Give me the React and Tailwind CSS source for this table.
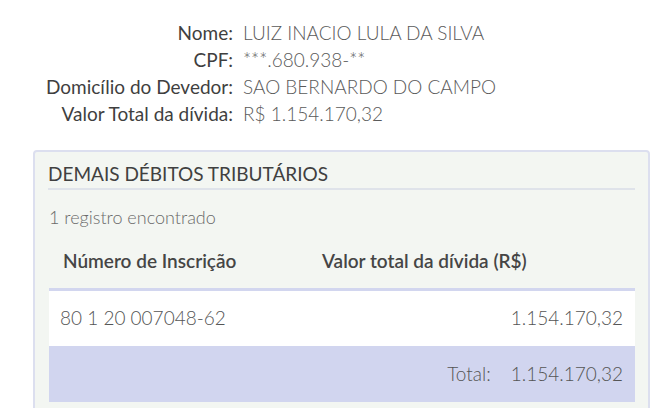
export default function App() {
  const info = [
    ['Nome:', 'LUIZ INACIO LULA DA SILVA'],
    ['CPF:', '***.680.938-**'],
    ['Domicílio do Devedor:', 'SAO BERNARDO DO CAMPO'],
    ['Valor Total da dívida:', 'R$ 1.154.170,32'],
  ];

  return (
    <div className="w-[652px] h-[408px] overflow-hidden bg-white text-[#444] font-['Lato','Open_Sans',sans-serif]">
      {/* dados do devedor */}
      <div className="pt-[21px] grid grid-cols-[233px_1fr] gap-x-[10px] gap-y-[3px] text-[19px] leading-[24px]">
        {info.map(([label, value]) => (
          <div key={label} className="contents">
            <div className="text-right text-[#3f3f3f]">{label}</div>
            <div className="text-[#5a5a5a] font-light">{value}</div>
          </div>
        ))}
      </div>

      {/* painel */}
      <div className="mt-[24px] ml-[33px] mr-[2px] h-[300px] rounded-[4px] border-2 border-[#dcdfef] bg-[#f3f6f2] px-[10px] pt-[10px]">
        <div className="mx-[3px] border-b-2 border-[#dfe3ea] pb-[2px] text-[19px] leading-[24px] text-[#404040]">
          DEMAIS DÉBITOS TRIBUTÁRIOS
        </div>
        <div className="mt-[17px] ml-[4px] text-[18px] leading-[20px] text-[#6a6a6a] font-light">1 registro encontrado</div>

        <div className="mt-[18px] ml-[4px] mr-[3px]">
          <div className="flex h-[43px] items-start pt-[2px] text-[19px] font-semibold text-[#454545]">
            <div className="w-[273px] pl-[14px]">Número de Inscrição</div>
            <div>Valor total da dívida (R$)</div>
          </div>
          <div className="border-t-[3px] border-[#d2d6ef]">
            <div className="flex h-[55px] items-center justify-between bg-white pl-[11px] pr-[12px] text-[19px] text-[#555] font-light">
              <span>80 1 20 007048-62</span>
              <span>1.154.170,32</span>
            </div>
            <div className="flex h-[56px] items-center justify-end gap-[20px] bg-[#d1d5ef] pr-[12px] text-[19px] text-[#555] font-light">
              <span>Total:</span>
              <span>1.154.170,32</span>
            </div>
          </div>
        </div>
      </div>
    </div>
  );
}
